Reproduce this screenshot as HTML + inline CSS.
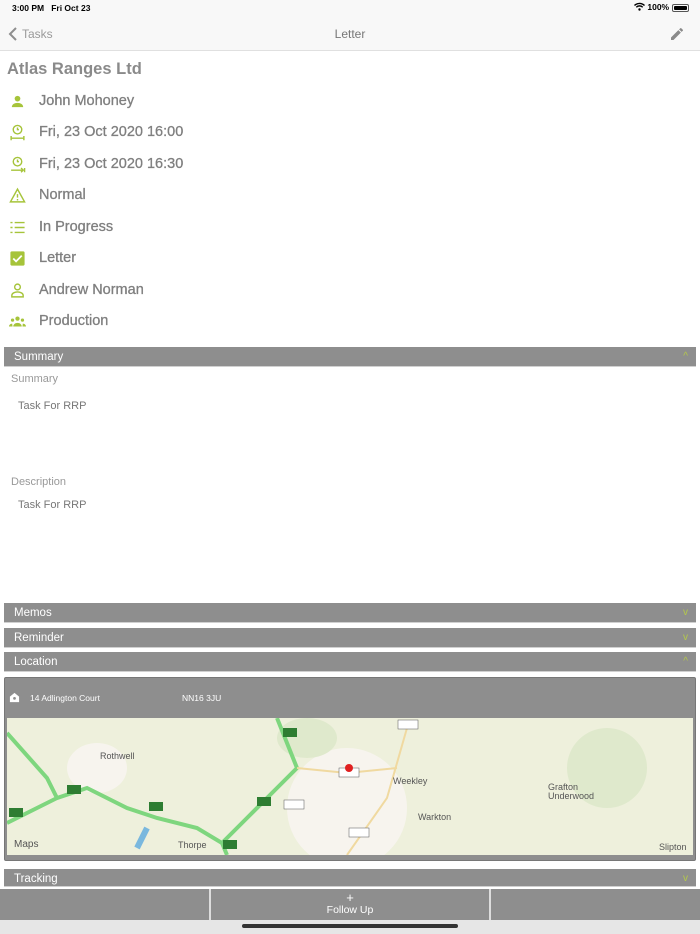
<!DOCTYPE html>
<html><head><meta charset="utf-8"><style>
*{margin:0;padding:0;box-sizing:border-box}
body{width:700px;height:934px;position:relative;background:#fff;font-family:"Liberation Sans",sans-serif;overflow:hidden;color:#8a8a8a}
.a{position:absolute}
.bar{position:absolute;left:4px;width:692px;height:20px;background:#8e8e8e;color:#fff;font-size:11.5px;line-height:20px;padding-left:10px;border-bottom:1px solid #d0d0d0}
.bar i{position:absolute;right:8px;top:0;color:#b5c94a;font-style:normal;font-size:10px}
.row{position:absolute;left:39px;font-size:14.5px;color:#7f7f7f;-webkit-text-stroke:0.3px #7f7f7f}
.ic{position:absolute;left:9px;width:17px;height:17px}
</style></head><body>
<div class="a" style="left:0;top:0;width:700px;height:51px;background:#f8f8f8;border-bottom:1px solid #e0e0e0"></div>
<div class="a" style="left:12px;top:3px;font-size:8.5px;color:#000;font-weight:bold">3:00 PM&nbsp;&nbsp;&nbsp;Fri Oct 23</div>
<div class="a" style="left:634px;top:2px;font-size:8.5px;color:#000;font-weight:bold">&#8203;<svg width="11" height="9" viewBox="0 0 11 9" style="vertical-align:-1px"><path d="M0.5 3.5A7 7 0 0 1 10.5 3.5M2.3 5.2A4.5 4.5 0 0 1 8.7 5.2" stroke="#000" stroke-width="1.4" fill="none"/><circle cx="5.5" cy="7.5" r="1.2"/></svg> 100%</div>
<div class="a" style="left:672px;top:4px;width:17px;height:8px;border:1px solid #555;border-radius:2px;padding:1px"><div style="width:100%;height:100%;background:#000;border-radius:1px"></div></div>
<svg class="a" style="left:8px;top:27px" width="10" height="14"><path d="M8 1L2 7L8 13" stroke="#8e8e8e" stroke-width="2" fill="none"/></svg>
<div class="a" style="left:22px;top:27px;font-size:12px;color:#9a9a9a">Tasks</div>
<div class="a" style="left:0;width:700px;text-align:center;top:27px;font-size:12px;color:#777">Letter</div>
<svg class="a" style="left:669px;top:26px" width="16" height="16" viewBox="0 0 24 24"><path d="M3 17.25V21h3.75L17.81 9.94l-3.75-3.75L3 17.25zM20.71 7.04a1 1 0 000-1.41l-2.34-2.34a1 1 0 00-1.41 0l-1.83 1.83 3.75 3.75 1.83-1.83z" fill="#8a8a8a"/></svg>

<div class="a" style="left:7px;top:60px;font-size:16.5px;font-weight:bold;color:#8a8a8a">Atlas Ranges Ltd</div>

<svg class="ic" style="top:93px" viewBox="0 0 24 24"><circle cx="12" cy="8" r="4" fill="#a6c43a"/><path d="M4 20c0-4 4-6 8-6s8 2 8 6z" fill="#a6c43a"/></svg>
<div class="row" style="top:93px">John Mohoney</div>
<svg class="ic" style="top:124px" viewBox="0 0 24 24" fill="none" stroke="#a6c43a" stroke-width="2"><circle cx="12" cy="8" r="6"/><path d="M12 5v3h2M3 20h18M3 17v6M21 17v6"/></svg>
<div class="row" style="top:124px">Fri, 23 Oct 2020 16:00</div>
<svg class="ic" style="top:156px" viewBox="0 0 24 24" fill="none" stroke="#a6c43a" stroke-width="2"><circle cx="12" cy="8" r="6"/><path d="M12 5v3h2M3 20h17M17 17l3 3-3 3M22 17v6"/></svg>
<div class="row" style="top:156px">Fri, 23 Oct 2020 16:30</div>
<svg class="ic" style="top:187px" viewBox="0 0 24 24" fill="none" stroke="#a6c43a" stroke-width="2"><path d="M12 3L2 21h20z M12 10v5M12 17v2"/></svg>
<div class="row" style="top:187px">Normal</div>
<svg class="ic" style="top:219px" viewBox="0 0 24 24" fill="none" stroke="#a6c43a" stroke-width="2"><path d="M8 5h14M8 12h14M8 19h14M2 5h3M2 12h3M2 19h3"/></svg>
<div class="row" style="top:219px">In Progress</div>
<svg class="ic" style="top:250px" viewBox="0 0 24 24"><rect x="2" y="2" width="20" height="20" rx="2" fill="#a6c43a"/><path d="M6 12l4 4 8-8" stroke="#fff" stroke-width="2.5" fill="none"/></svg>
<div class="row" style="top:250px">Letter</div>
<svg class="ic" style="top:282px" viewBox="0 0 24 24" fill="none" stroke="#a6c43a" stroke-width="2"><circle cx="12" cy="7" r="4"/><path d="M4 21v-2c0-3 4-5 8-5s8 2 8 5v2z"/></svg>
<div class="row" style="top:282px">Andrew Norman</div>
<svg class="ic" style="top:313px" viewBox="0 0 24 24" fill="#a6c43a"><circle cx="12" cy="8" r="3"/><circle cx="5" cy="10" r="2.3"/><circle cx="19" cy="10" r="2.3"/><path d="M6 19c0-3 3-5 6-5s6 2 6 5zM0 19c0-2 2-4 4.5-4L5 19zM24 19c0-2-2-4-4.5-4L19 19z"/></svg>
<div class="row" style="top:313px">Production</div>

<div class="bar" style="top:347px">Summary<i>^</i></div>
<div class="a" style="left:11px;top:373px;font-size:11px;color:#999">Summary</div>
<div class="a" style="left:18px;top:400px;font-size:11px;color:#777">Task For RRP</div>
<div class="a" style="left:11px;top:476px;font-size:11px;color:#999">Description</div>
<div class="a" style="left:18px;top:499px;font-size:11px;color:#777">Task For RRP</div>

<div class="bar" style="top:603px">Memos<i>v</i></div>
<div class="bar" style="top:628px">Reminder<i>v</i></div>
<div class="bar" style="top:652px">Location<i>^</i></div>
<div class="a" style="left:4px;top:677px;width:692px;height:184px;background:#8e8e8e;border:1px solid #777;border-radius:2px"></div>
<svg class="a" style="left:9px;top:692px" width="11" height="11" viewBox="0 0 12 12"><path d="M6 1L1 5v6h10V5z" fill="#fff"/><circle cx="6" cy="7" r="1.5" fill="#8e8e8e"/></svg>
<div class="a" style="left:30px;top:693px;font-size:8.5px;color:#fff">14 Adlington Court</div>
<div class="a" style="left:182px;top:693px;font-size:8.5px;color:#fff">NN16 3JU</div>
<svg class="a" style="left:7px;top:718px" width="686" height="137" viewBox="0 0 686 137" font-family="Liberation Sans">
<rect width="686" height="137" fill="#eef0dc"/>
<ellipse cx="340" cy="90" rx="60" ry="60" fill="#f7f4ee"/>
<ellipse cx="90" cy="50" rx="30" ry="25" fill="#f7f4ee"/>
<ellipse cx="600" cy="50" rx="40" ry="40" fill="#dfe9cc"/>
<ellipse cx="300" cy="20" rx="30" ry="20" fill="#dfe9cc"/>
<path d="M0 15L40 60L50 80L80 70L120 90L150 100L190 110L215 125L220 137M215 125L240 100L270 70L290 50L270 0M0 105L50 80" stroke="#7ed67e" stroke-width="4" fill="none"/>
<path d="M290 50L340 55L390 50M400 10L380 80L340 137" stroke="#f0d9a0" stroke-width="2" fill="none"/>
<path d="M130 130L140 110" stroke="#7ab8de" stroke-width="6"/>
<rect x="60" y="67" width="14" height="9" fill="#2e7d32"/><rect x="142" y="84" width="14" height="9" fill="#2e7d32"/><rect x="2" y="90" width="14" height="9" fill="#2e7d32"/><rect x="250" y="79" width="14" height="9" fill="#2e7d32"/><rect x="276" y="10" width="14" height="9" fill="#2e7d32"/><rect x="216" y="122" width="14" height="9" fill="#2e7d32"/>
<rect x="277" y="82" width="20" height="9" fill="#fff" stroke="#555" stroke-width=".5"/><rect x="391" y="2" width="20" height="9" fill="#fff" stroke="#555" stroke-width=".5"/><rect x="342" y="110" width="20" height="9" fill="#fff" stroke="#555" stroke-width=".5"/><rect x="332" y="50" width="20" height="9" fill="#fff" stroke="#555" stroke-width=".5"/>
<circle cx="342" cy="50" r="4" fill="#e02020"/>
<g font-size="9" fill="#555"><text x="93" y="41">Rothwell</text><text x="386" y="66">Weekley</text><text x="411" y="102">Warkton</text><text x="541" y="72">Grafton</text><text x="541" y="81">Underwood</text><text x="171" y="130">Thorpe</text><text x="652" y="132">Slipton</text></g>
<text x="7" y="129" font-size="10" fill="#555">Maps</text>
</svg>
<div class="bar" style="top:869px;height:18px">Tracking<i>v</i></div>
<div class="a" style="left:0;top:889px;width:700px;height:31px;background:#8e8e8e"></div>
<div class="a" style="left:209px;top:889px;width:2px;height:31px;background:#ddd"></div>
<div class="a" style="left:489px;top:889px;width:2px;height:31px;background:#ddd"></div>
<div class="a" style="left:0;width:700px;text-align:center;top:892px;color:#fff;font-size:13px;line-height:12px">+</div>
<div class="a" style="left:0;width:700px;text-align:center;top:904px;color:#fff;font-size:10.5px">Follow Up</div>
<div class="a" style="left:0;top:920px;width:700px;height:14px;background:#e6e6e6"></div>
<div class="a" style="left:242px;top:924px;width:216px;height:4px;background:#333;border-radius:2px"></div>
</body></html>
